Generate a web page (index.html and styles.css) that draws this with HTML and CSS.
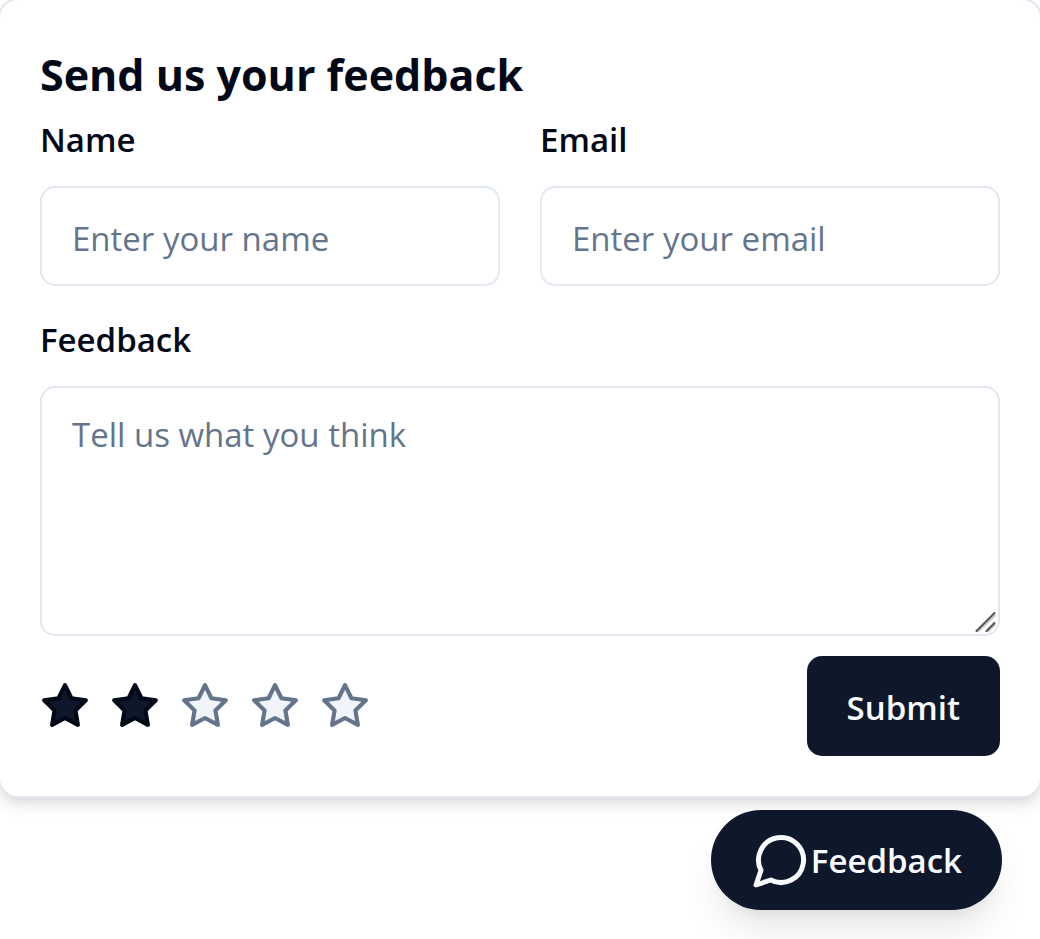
FILE: index.html
```html
<!DOCTYPE html>
<html lang="en">
<head>
  <meta charset="utf-8">
  <meta name="viewport" content="width=device-width, initial-scale=1">
  <title>Feedback</title>
  <link rel="stylesheet" href="styles.css">
</head>
<body>
  <svg class="sprite" aria-hidden="true">
    <symbol id="star" viewBox="0 0 24 24">
      <polygon points="12 2 15.09 8.26 22 9.27 17 14.14 18.18 21.02 12 17.77 5.82 21.02 7 14.14 2 9.27 8.91 8.26 12 2"/>
    </symbol>
  </svg>
  <main class="widget">
    <form class="card">
      <h1 class="title">Send us your feedback</h1>
      <div class="fields">
        <div class="field">
          <label class="label" for="name">Name</label>
          <input class="control" id="name" type="text" placeholder="Enter your name">
        </div>
        <div class="field">
          <label class="label" for="email">Email</label>
          <input class="control" id="email" type="email" placeholder="Enter your email">
        </div>
      </div>
      <div class="field">
        <label class="label" for="feedback">Feedback</label>
        <div class="area">
          <textarea class="control control-area" id="feedback" placeholder="Tell us what you think"></textarea>
          <svg class="grip" viewBox="0 0 24 24" aria-hidden="true">
            <path class="grip-light" d="M4 21.500L21 5.500M14 21.500L21 15"/>
            <path class="grip-dark" d="M2.500 21L20.500 3M12.500 21L20.500 13"/>
          </svg>
        </div>
      </div>
      <div class="actions">
        <div class="rating">
          <button class="star star-on" type="button" aria-label="1 star"><svg class="star-icon"><use href="#star"/></svg></button>
          <button class="star star-on" type="button" aria-label="2 stars"><svg class="star-icon"><use href="#star"/></svg></button>
          <button class="star" type="button" aria-label="3 stars"><svg class="star-icon"><use href="#star"/></svg></button>
          <button class="star" type="button" aria-label="4 stars"><svg class="star-icon"><use href="#star"/></svg></button>
          <button class="star" type="button" aria-label="5 stars"><svg class="star-icon"><use href="#star"/></svg></button>
        </div>
        <button class="button" type="submit">Submit</button>
      </div>
    </form>
    <button class="button launcher" type="button">
      <svg class="launcher-icon" viewBox="0 0 24 24" aria-hidden="true"><path d="M7.9 20A9 9 0 1 0 4 16.1L2 22Z"/></svg>
      Feedback
    </button>
  </main>
</body>
</html>
```
FILE: styles.css
```css
* {
  box-sizing: border-box;
}

body {
  margin: 0;
  background: #fff;
  color: #020817;
  font-family: "Open Sans", "Noto Sans", sans-serif;
  font-size: 33px;
}

button,
input,
textarea {
  font: inherit;
}

.sprite {
  position: absolute;
  width: 0;
  height: 0;
}

.widget {
  display: flex;
  flex-direction: column;
  gap: 12px;
  min-height: 100vh;
  overflow: hidden;
}

.card {
  margin: -2px -2px 0;
  padding: 40px;
  border: 2px solid #e2e8f0;
  border-radius: 20px;
  background: #fff;
  box-shadow: 0 10px 15px -2px rgb(0 0 0 / 0.1), 0 5px 10px -5px rgb(0 0 0 / 0.1);
}

.title {
  margin: 0 0 12px;
  font-size: 43px;
  font-weight: 700;
  line-height: 70px;
}

.fields {
  display: grid;
  grid-template-columns: 1fr 1fr;
  gap: 40px;
  margin-bottom: 36px;
}

.field {
  display: flex;
  flex-direction: column;
  gap: 28px;
  min-width: 0;
}

.label {
  font-weight: 600;
  line-height: 36px;
}

.control {
  display: block;
  width: 100%;
  height: 100px;
  padding: 24px 30px 20px;
  border: 2px solid #e2e8f0;
  border-radius: 15px;
  outline: none;
  background: #fff;
  color: #020817;
}

.control::placeholder {
  color: #64748b;
  opacity: 1;
}

.area {
  position: relative;
}

.control-area {
  height: 250px;
  padding: 20px 30px;
  line-height: 54px;
  resize: none;
}

.grip {
  position: absolute;
  right: 2px;
  bottom: 2px;
  width: 24px;
  height: 24px;
  fill: none;
  stroke-linecap: round;
  pointer-events: none;
}

.grip-light {
  stroke: #ccc;
  stroke-width: 2;
}

.grip-dark {
  stroke: #555;
  stroke-width: 2;
}

.actions {
  display: flex;
  align-items: center;
  justify-content: space-between;
  margin-top: 20px;
}

.rating {
  display: flex;
  gap: 20px;
}

.star {
  padding: 0;
  border: 0;
  background: none;
  color: #64748b;
  fill: #f1f5f9;
}

.star-on {
  color: #020817;
  fill: #0f172a;
}

.star-icon {
  display: block;
  width: 50px;
  height: 50px;
  stroke: currentColor;
  stroke-width: 2;
  stroke-linejoin: round;
}

.button {
  display: flex;
  align-items: center;
  height: 100px;
  padding: 2px 40px 0;
  border: 0;
  border-radius: 15px;
  background: #0f172a;
  color: #f8fafc;
  font-weight: 600;
}

.launcher {
  align-self: flex-end;
  margin-right: 38px;
  padding-top: 0;
  border-radius: 50px;
  box-shadow: 0 25px 38px -8px rgb(0 0 0 / 0.1), 0 10px 15px -10px rgb(0 0 0 / 0.1);
}

.launcher-icon {
  width: 60px;
  height: 60px;
  fill: none;
  stroke: currentColor;
  stroke-width: 2;
  stroke-linecap: round;
  stroke-linejoin: round;
}
```
